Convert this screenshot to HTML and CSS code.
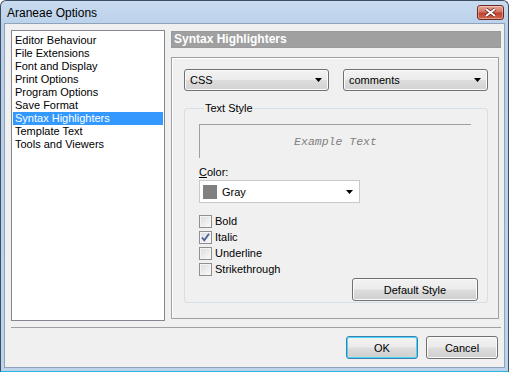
FILE: index.html
```html
<!DOCTYPE html>
<html lang="en">
<head>
    <meta charset="UTF-8">
    <title>Araneae Options</title>
    <link rel="stylesheet" href="styles.css">
</head>
<body>
<div class="window">
    <div class="titlebar">
        <span class="title">Araneae Options</span>
        <a href="#none" class="close">
            <svg width="13" height="9" viewBox="0 0 13 9">
                <path d="M2 1 L11 8 M11 1 L2 8" stroke="#5a1a12" stroke-width="3.4"/>
                <path d="M2 1 L11 8 M11 1 L2 8" stroke="#fff" stroke-width="2"/>
            </svg>
        </a>
    </div>
    <div class="client">
        <div class="main">
            <ul class="pages">
                <li>Editor Behaviour</li>
                <li>File Extensions</li>
                <li>Font and Display</li>
                <li>Print Options</li>
                <li>Program Options</li>
                <li>Save Format</li>
                <li class="sel">Syntax Highlighters</li>
                <li>Template Text</li>
                <li>Tools and Viewers</li>
            </ul>
            <div class="panel">
                <div class="head">Syntax Highlighters</div>
                <div class="box">
                    <div class="combos">
                        <div class="combo"><span>CSS</span>
                            <svg width="7" height="4" viewBox="0 0 7 4"><path d="M0 0H7L3.5 4Z" fill="#000"/></svg>
                        </div>
                        <div class="combo"><span>comments</span>
                            <svg width="7" height="4" viewBox="0 0 7 4"><path d="M0 0H7L3.5 4Z" fill="#000"/></svg>
                        </div>
                    </div>
                    <fieldset class="group">
                        <legend>Text Style</legend>
                        <div class="example">Example Text</div>
                        <div class="lbl"><u>C</u>olor:</div>
                        <div class="colorpick">
                            <span class="swatch"></span>
                            <span class="cname">Gray</span>
                            <svg width="7" height="4" viewBox="0 0 7 4"><path d="M0 0H7L3.5 4Z" fill="#000"/></svg>
                        </div>
                        <ul class="checks">
                            <li><span class="cb"></span>Bold</li>
                            <li><span class="cb on">
                                <svg width="11" height="11" viewBox="0 0 11 11"><path d="M2 5.5 L4.3 8.3 L9 1.8" fill="none" stroke="#4a5f9c" stroke-width="1.8"/></svg>
                            </span>Italic</li>
                            <li><span class="cb"></span>Underline</li>
                            <li><span class="cb"></span>Strikethrough</li>
                        </ul>
                        <div class="defrow"><a href="#none" class="btn wide">Default Style</a></div>
                    </fieldset>
                </div>
            </div>
        </div>
        <div class="sep"></div>
        <div class="buttons">
            <a href="#none" class="btn ok">OK</a>
            <a href="#none" class="btn">Cancel</a>
        </div>
    </div>
</div>
</body>
</html>
```

FILE: styles.css
```css
*{padding: 0;
margin: 0;
box-sizing: border-box;}
body{
    font-family: "Liberation Sans", Arial, sans-serif;
    font-size: 11px;
    color: #000;
    background: #fff;
}
ul{list-style: none;}
a{color: #000; text-decoration: none;}

.window{
    width: 509px;
    height: 372px;
    display: flex;
    flex-direction: column;
    border: 1px solid #3e4f63;
    border-bottom-color: #2fb4e0;
    border-radius: 6px 6px 0 0;
    background: linear-gradient(#c8dbef, #b7cfe9 30px, #bcd3ec);
    padding: 0 3px 3px 3px;
}
.titlebar{
    height: 22px;
    display: flex;
    align-items: center;
    justify-content: space-between;
    padding: 0 1px 0 3px;
}
.title{
    font-size: 12px;
    color: #000;
    padding-top: 1px;
}
.close{
    width: 27px;
    height: 15px;
    margin-top: 1px;
    border: 1px solid #6d2a22;
    border-radius: 3px;
    background: linear-gradient(#e8a799, #d47563 45%, #c0402d 55%, #d06a50);
    display: flex;
    align-items: center;
    justify-content: center;
    box-shadow: inset 0 0 0 1px rgba(255,255,255,0.35);
}

.client{
    flex: 1;
    background: #f0f0f0;
    border: 1px solid #8ea3bb;
    padding: 6px 3px 8px 6px;
    display: flex;
    flex-direction: column;
}
.main{
    display: flex;
    gap: 6px;
    height: 291px;
}
.pages{
    width: 154px;
    border: 1px solid #828790;
    background: #fff;
    padding: 3px 1px;
}
.pages li{
    line-height: 13px;
    padding-left: 2px;
}
.pages .sel{
    background: #3399ff;
    color: #fff;
}

.panel{
    flex: 1;
    padding-top: 1px;
}
.head{
    height: 17px;
    background: #a0a0a0;
    border: 1px solid #9a9a9a;
    color: #fff;
    font-weight: bold;
    font-size: 12px;
    line-height: 15px;
    padding-left: 2px;
}
.box{
    margin-top: 9px;
    width: 328px;
    height: 262px;
    border: 1px solid #a0a0a0;
    box-shadow: inset 1px 1px 0 #fff;
    padding: 11px 0 0 12px;
}
.combos{
    display: flex;
    gap: 14px;
}
.combo{
    width: 145px;
    height: 22px;
    border: 1px solid #707070;
    border-radius: 3px;
    background: linear-gradient(#f3f3f3, #ebebeb 48%, #dddddd 52%, #d2d2d2);
    box-shadow: inset 0 0 0 1px #fbfbfb;
    display: flex;
    align-items: center;
    justify-content: space-between;
    padding: 0 6px 0 5px;
}

.group{
    width: 304px;
    height: 201px;
    margin-top: 11px;
    border: 1px solid #d5dfe5;
    border-radius: 3px;
    padding: 10px 9px 0 14px;
}
.group legend{
    margin-left: 5px;
    padding: 0 1px;
}
.example{
    width: 272px;
    height: 34px;
    border-top: 1px solid #a0a0a0;
    border-left: 1px solid #a0a0a0;
    font-family: "Liberation Mono", "Courier New", monospace;
    font-style: italic;
    font-size: 11.5px;
    color: #808080;
    text-align: center;
    line-height: 33px;
}
.lbl{
    margin-top: 8px;
    line-height: 13px;
}
.lbl u{text-decoration: underline;}
.colorpick{
    margin-top: 1px;
    width: 161px;
    height: 23px;
    background: #fff;
    border: 1px solid #c9c9c9;
    display: flex;
    align-items: center;
    padding: 0 6px 0 3px;
}
.swatch{
    width: 14px;
    height: 14px;
    background: #808080;
}
.cname{
    flex: 1;
    margin-left: 5px;
}
.checks{
    margin-top: 10px;
}
.checks li{
    display: flex;
    align-items: center;
    height: 16px;
}
.cb{
    width: 13px;
    height: 13px;
    border: 1px solid #8f8f8f;
    background: linear-gradient(135deg, #dcdcdc, #fbfbfb);
    box-shadow: inset 0 0 0 1px #f4f4f4;
    margin-right: 3px;
    display: flex;
    align-items: center;
    justify-content: center;
}
.defrow{
    display: flex;
    justify-content: flex-end;
    margin-top: 1px;
}
.btn{
    width: 72px;
    height: 23px;
    border: 1px solid #707070;
    border-radius: 3px;
    background: linear-gradient(#f3f3f3, #ebebeb 48%, #dddddd 52%, #cfcfcf);
    box-shadow: inset 0 0 0 1px #fbfbfb;
    display: flex;
    align-items: center;
    justify-content: center;
}
.btn.wide{
    width: 126px;
}
.btn.ok{
    border-color: #3c7fb1;
    box-shadow: inset 0 0 0 1px #48d7f4;
}

.sep{
    margin-top: 6px;
    height: 1px;
    background: #a0a0a0;
}
.buttons{
    margin-top: 8px;
    display: flex;
    justify-content: flex-end;
    gap: 8px;
    padding-right: 3px;
}
```
